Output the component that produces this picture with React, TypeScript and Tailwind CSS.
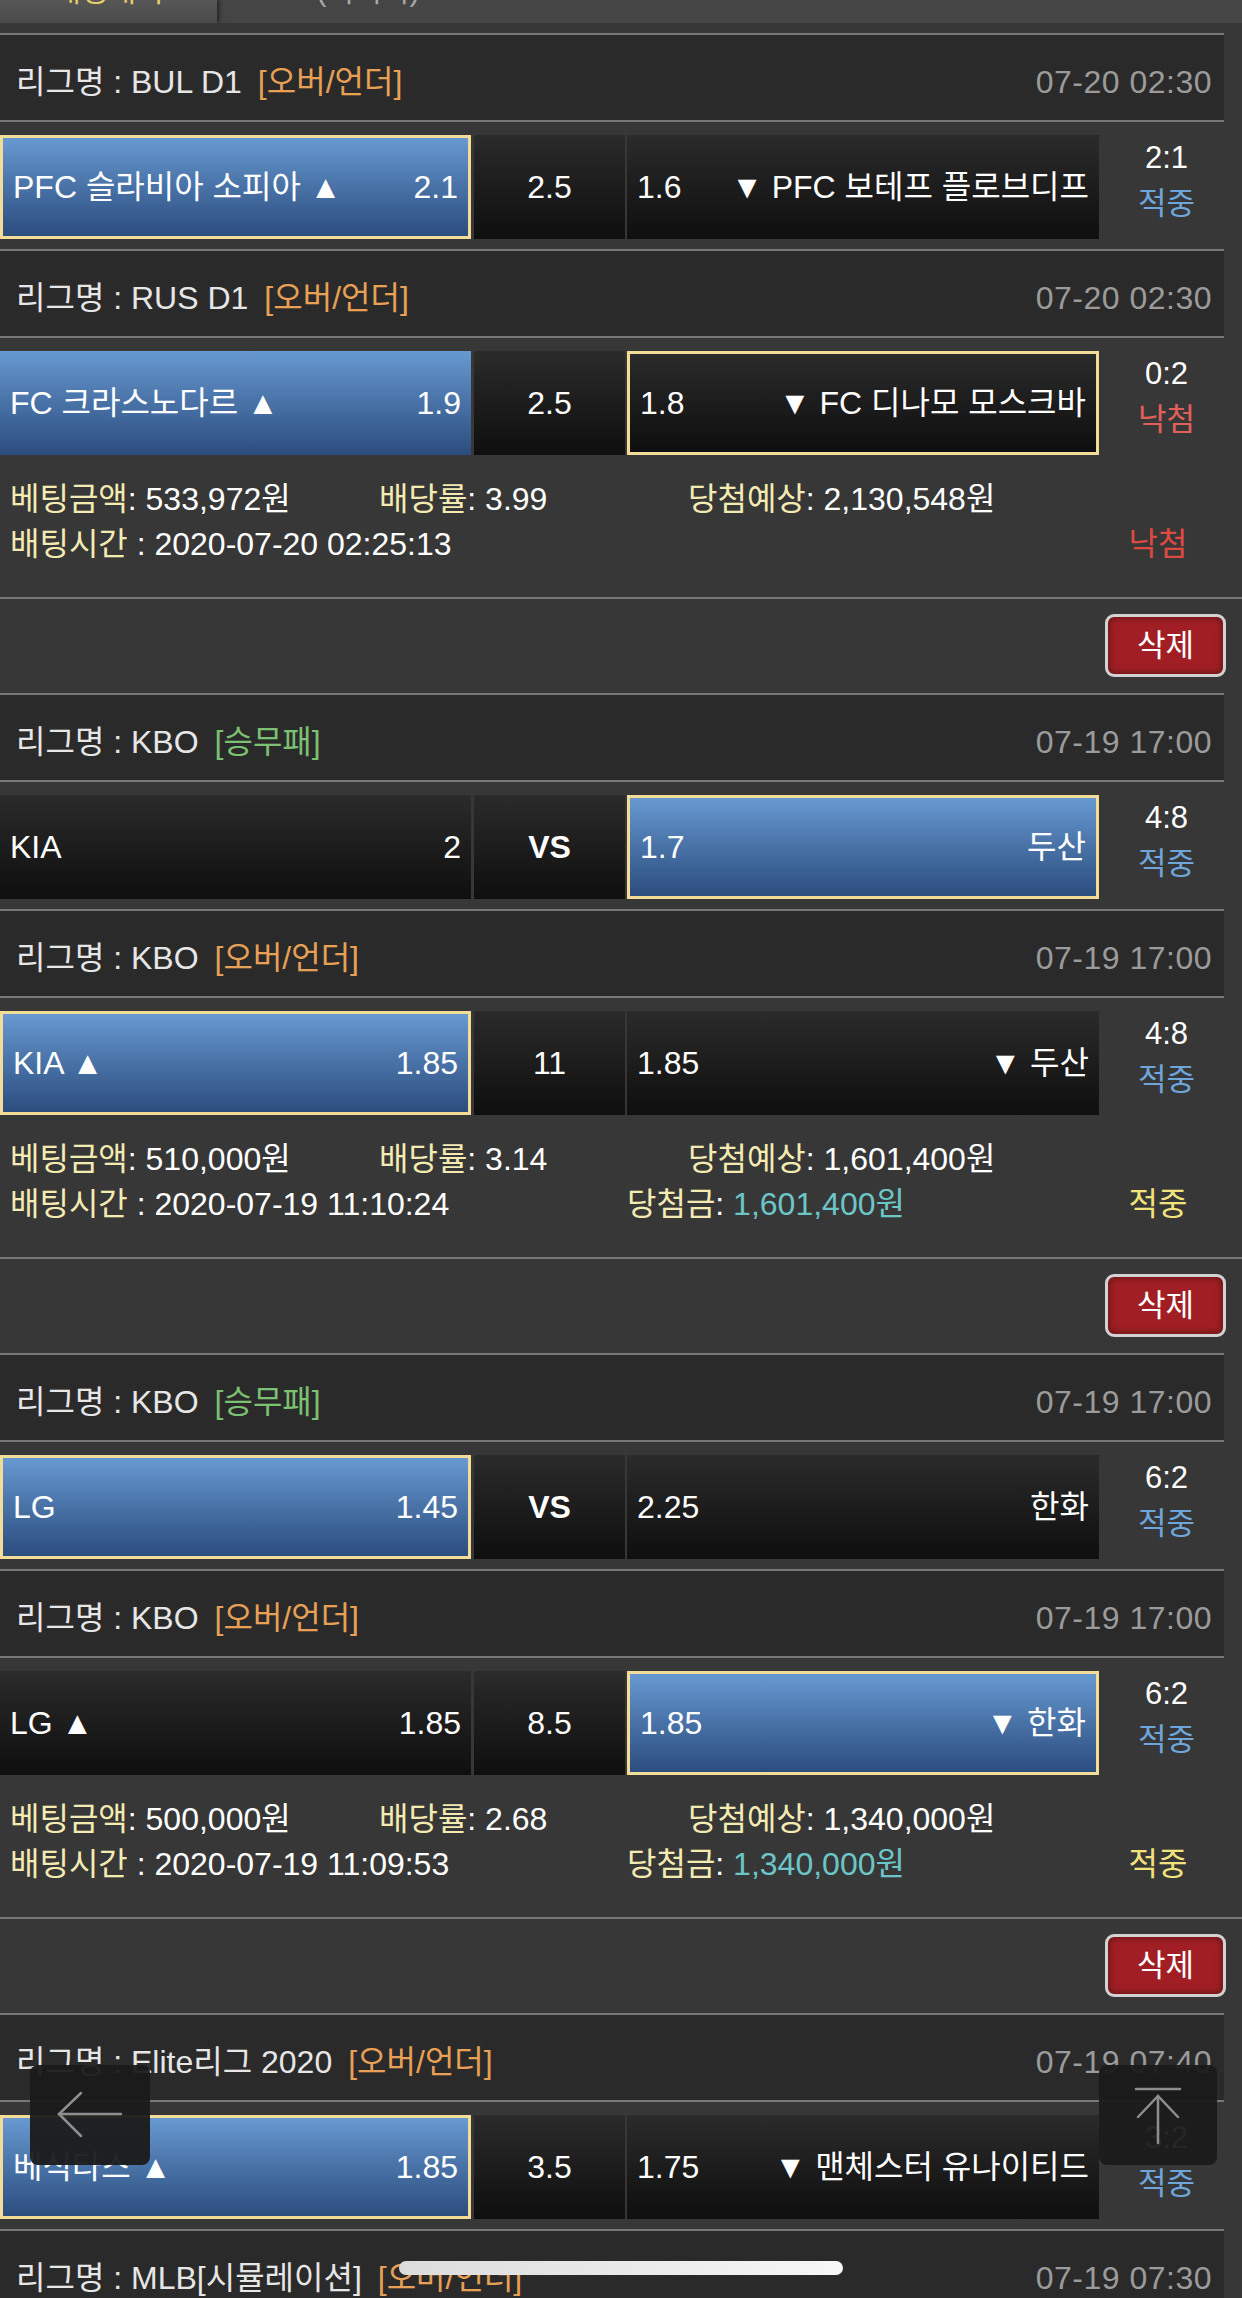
import React from "react";

type Side = { name: string; odds: string; blue?: boolean; sel?: boolean };

type Match = {
  league: string;
  tag: string;
  tagClass: string;
  date: string;
  left: Side;
  mid: string;
  vs?: boolean;
  right: Side;
  score: string;
  result: "적중" | "낙첨";
};

type Group = {
  matches: Match[];
  info?: {
    amount: string;
    rate: string;
    expect: string;
    time: string;
    win?: string;
    status: "적중" | "낙첨";
  };
};

const OU = "text-[#e7a055]";
const WDL = "text-[#7cc072]";

const groups: Group[] = [
  {
    matches: [
      {
        league: "BUL D1",
        tag: "[오버/언더]",
        tagClass: OU,
        date: "07-20 02:30",
        left: { name: "PFC 슬라비아 소피아 ▲", odds: "2.1", blue: true, sel: true },
        mid: "2.5",
        right: { name: "▼ PFC 보테프 플로브디프", odds: "1.6" },
        score: "2:1",
        result: "적중",
      },
      {
        league: "RUS D1",
        tag: "[오버/언더]",
        tagClass: OU,
        date: "07-20 02:30",
        left: { name: "FC 크라스노다르 ▲", odds: "1.9", blue: true },
        mid: "2.5",
        right: { name: "▼ FC 디나모 모스크바", odds: "1.8", sel: true },
        score: "0:2",
        result: "낙첨",
      },
    ],
    info: {
      amount: "533,972원",
      rate: "3.99",
      expect: "2,130,548원",
      time: "2020-07-20 02:25:13",
      status: "낙첨",
    },
  },
  {
    matches: [
      {
        league: "KBO",
        tag: "[승무패]",
        tagClass: WDL,
        date: "07-19 17:00",
        left: { name: "KIA", odds: "2" },
        mid: "VS",
        vs: true,
        right: { name: "두산", odds: "1.7", blue: true, sel: true },
        score: "4:8",
        result: "적중",
      },
      {
        league: "KBO",
        tag: "[오버/언더]",
        tagClass: OU,
        date: "07-19 17:00",
        left: { name: "KIA ▲", odds: "1.85", blue: true, sel: true },
        mid: "11",
        right: { name: "▼ 두산", odds: "1.85" },
        score: "4:8",
        result: "적중",
      },
    ],
    info: {
      amount: "510,000원",
      rate: "3.14",
      expect: "1,601,400원",
      time: "2020-07-19 11:10:24",
      win: "1,601,400원",
      status: "적중",
    },
  },
  {
    matches: [
      {
        league: "KBO",
        tag: "[승무패]",
        tagClass: WDL,
        date: "07-19 17:00",
        left: { name: "LG", odds: "1.45", blue: true, sel: true },
        mid: "VS",
        vs: true,
        right: { name: "한화", odds: "2.25" },
        score: "6:2",
        result: "적중",
      },
      {
        league: "KBO",
        tag: "[오버/언더]",
        tagClass: OU,
        date: "07-19 17:00",
        left: { name: "LG ▲", odds: "1.85" },
        mid: "8.5",
        right: { name: "▼ 한화", odds: "1.85", blue: true, sel: true },
        score: "6:2",
        result: "적중",
      },
    ],
    info: {
      amount: "500,000원",
      rate: "2.68",
      expect: "1,340,000원",
      time: "2020-07-19 11:09:53",
      win: "1,340,000원",
      status: "적중",
    },
  },
  {
    matches: [
      {
        league: "Elite리그 2020",
        tag: "[오버/언더]",
        tagClass: OU,
        date: "07-19 07:40",
        left: { name: "베식타스 ▲", odds: "1.85", blue: true, sel: true },
        mid: "3.5",
        right: { name: "▼ 맨체스터 유나이티드", odds: "1.75" },
        score: "3:2",
        result: "적중",
      },
      {
        league: "MLB[시뮬레이션]",
        tag: "[오버/언더]",
        tagClass: OU,
        date: "07-19 07:30",
        left: { name: "보스턴 ▲", odds: "1.9", blue: true, sel: true },
        mid: "8.5",
        right: { name: "▼ 뉴욕 양키스", odds: "1.8" },
        score: "5:4",
        result: "적중",
      },
    ],
  },
];

function LeagueHeader({ m }: { m: Match }) {
  return (
    <div className="w-[1224px] h-[87px] border-t-2 border-[#787878] bg-[#2a2a2a] flex items-center justify-between pt-[8px] pl-[16px] pr-[12px] leading-[38px]">
      <div className="flex items-center">
        <span className="text-[#e6e6e6]">리그명 : {m.league}</span>
        <span className={`ml-[16px] ${m.tagClass}`}>{m.tag}</span>
      </div>
      <span className="text-[#9b9b9b] tracking-[0.5px]">{m.date}</span>
    </div>
  );
}

function Cell({ side, flip, width }: { side: Side; flip?: boolean; width: string }) {
  const bg = side.blue
    ? "bg-linear-to-b from-[#6799d1] to-[#2c4d7e]"
    : "bg-linear-to-b from-[#2b2b2b] to-[#0f0f0f]";
  const border = side.sel ? "border-[3px] border-[#f2dc98]" : "";
  return (
    <div className={`${width} h-full flex items-center justify-between px-[10px] text-white ${bg} ${border}`}>
      {flip ? (
        <>
          <span>{side.odds}</span>
          <span>{side.name}</span>
        </>
      ) : (
        <>
          <span>{side.name}</span>
          <span>{side.odds}</span>
        </>
      )}
    </div>
  );
}

function MatchRow({ m, last }: { m: Match; last: boolean }) {
  return (
    <div className={`w-[1224px] border-t-2 border-[#787878] pt-[13px] ${last ? "" : "pb-[10px]"}`}>
      <div className="flex h-[104px] leading-[38px]">
        <Cell side={m.left} width="w-[471px]" />
        <div className="ml-[3px] w-[151px] h-full flex items-center justify-center text-white bg-linear-to-b from-[#2b2b2b] to-[#0f0f0f]">
          <span className={m.vs ? "font-bold" : ""}>{m.mid}</span>
        </div>
        <div className="ml-[2px]" />
        <Cell side={m.right} flip width="w-[472px]" />
        <div className="w-[125px] h-full flex flex-col items-center justify-center pl-[10px] pb-[12px] text-[31px] leading-[46px]">
          <span className="text-white">{m.score}</span>
          <span className={m.result === "적중" ? "text-[#6ea6dc]" : "text-[#e0605a]"}>{m.result}</span>
        </div>
      </div>
    </div>
  );
}

function Label({ children }: { children: React.ReactNode }) {
  return <span className="text-[#f4ebb3]">{children}</span>;
}

function Info({ info }: { info: NonNullable<Group["info"]> }) {
  return (
    <div className="w-full border-b-2 border-[#787878] pt-[22px] pb-[30px] leading-[45px] text-white">
      <div className="flex pl-[10px] h-[45px]">
        <div className="w-[369px]">
          <Label>베팅금액</Label>: {info.amount}
        </div>
        <div className="w-[309px]">
          <Label>배당률</Label>: {info.rate}
        </div>
        <div>
          <Label>당첨예상</Label>: {info.expect}
        </div>
      </div>
      <div className="flex pl-[10px] h-[45px]">
        <div className="w-[617px]">
          <Label>배팅시간</Label> : {info.time}
        </div>
        <div className="flex-1">
          {info.win && (
            <>
              <Label>당첨금</Label>: <span className="text-[#6cc6c8]">{info.win}</span>
            </>
          )}
        </div>
        <div className={`w-[64px] mr-[52px] text-center ${info.status === "적중" ? "text-[#f2e27c]" : "text-[#de4a42]"}`}>
          {info.status}
        </div>
      </div>
    </div>
  );
}

function DeleteRow() {
  return (
    <div className="h-[94px] flex justify-end items-start pt-[15px] pr-[16px]">
      <button className="w-[121px] h-[63px] rounded-[9px] border-[3px] border-[#d2d2d2] bg-[#a11f24] shadow-[inset_0_0_8px_rgba(0,0,0,0.45)] text-white text-[31px] leading-none flex items-center justify-center">
        삭제
      </button>
    </div>
  );
}

export default function App() {
  return (
    <div className="relative w-[1242px] h-[2298px] overflow-hidden bg-[#373737] font-['Liberation_Sans','Noto_Sans_CJK_KR',sans-serif] text-[32px] text-white">
      <div className="h-[23px] flex bg-[#454545] overflow-hidden">
        <div className="w-[217px] h-full flex justify-center bg-linear-to-b from-[#575757] to-[#4a4a4a] shadow-[2px_0_4px_rgba(0,0,0,0.5)]">
          <span className="-mt-[24px] leading-[30px] text-[30px] text-[#e6cd6a]">배팅내역</span>
        </div>
        <div className="w-[302px] h-full flex justify-center">
          <span className="-mt-[24px] leading-[30px] text-[30px] text-[#a8a8a8]">(미처리)</span>
        </div>
      </div>
      <div className="h-[10px]" />

      {groups.map((g, gi) => (
        <div key={gi}>
          {g.matches.map((m, mi) => (
            <div key={mi}>
              <LeagueHeader m={m} />
              <MatchRow m={m} last={mi === g.matches.length - 1 && !!g.info} />
            </div>
          ))}
          {g.info && <Info info={g.info} />}
          {g.info && <DeleteRow />}
        </div>
      ))}

      <div className="absolute left-[30px] top-[2065px] w-[120px] h-[100px] rounded-[8px] bg-[#1a1a1a]/95">
        <svg width="120" height="100" viewBox="0 0 120 100" fill="none" stroke="#8e8e8e" strokeWidth="2.5" strokeLinecap="round">
          <path d="M29 49 H91" />
          <path d="M51 28 L29 49 L51 71" />
        </svg>
      </div>
      <div className="absolute left-[1099px] top-[2065px] w-[118px] h-[100px] rounded-[8px] bg-[#1a1a1a]/95">
        <svg width="118" height="100" viewBox="0 0 118 100" fill="none" stroke="#8e8e8e" strokeWidth="2.5" strokeLinecap="round">
          <path d="M37 24 H81" />
          <path d="M59 31 V78" />
          <path d="M39 52 L59 31 L79 52" />
        </svg>
      </div>
      <div className="absolute left-[399px] top-[2261px] w-[444px] h-[14px] rounded-full bg-linear-to-r from-[#dcdcdc] to-[#f7f7f7]" />
    </div>
  );
}
